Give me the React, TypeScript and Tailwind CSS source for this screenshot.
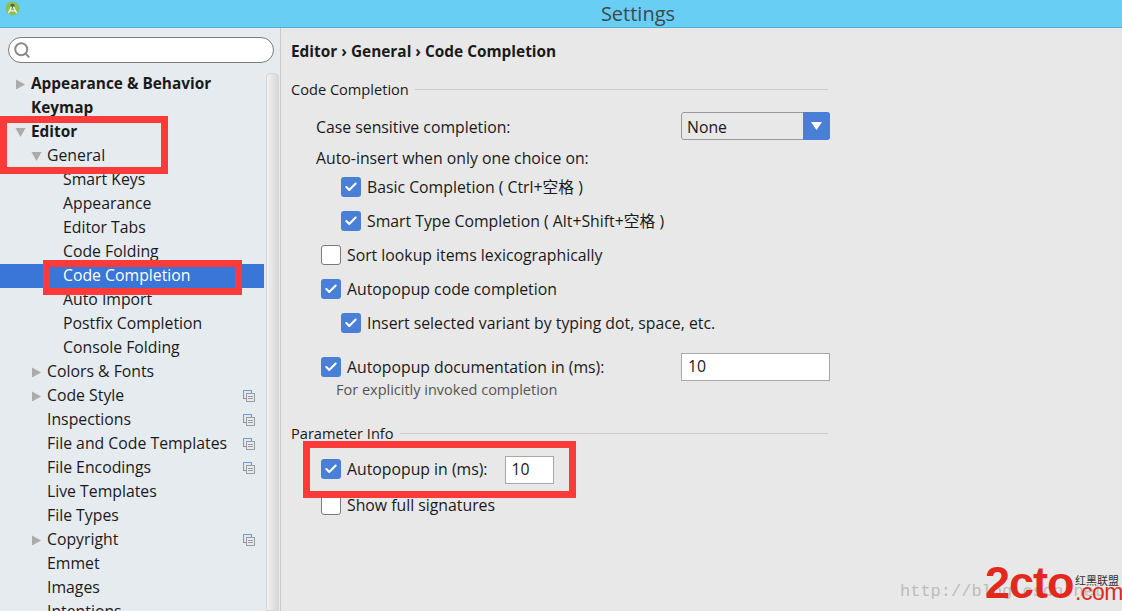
import { Check, Search } from "lucide-react";

const font = { fontFamily: '"Open Sans", "Noto Sans CJK SC", sans-serif' };

type Node = { label: string; depth: number; arrow?: "right" | "down"; bold?: boolean; copy?: boolean; selected?: boolean };

const tree: Node[] = [
  { label: "Appearance & Behavior", depth: 0, arrow: "right", bold: true },
  { label: "Keymap", depth: 0, bold: true },
  { label: "Editor", depth: 0, arrow: "down", bold: true },
  { label: "General", depth: 1, arrow: "down" },
  { label: "Smart Keys", depth: 2 },
  { label: "Appearance", depth: 2 },
  { label: "Editor Tabs", depth: 2 },
  { label: "Code Folding", depth: 2 },
  { label: "Code Completion", depth: 2, selected: true },
  { label: "Auto Import", depth: 2 },
  { label: "Postfix Completion", depth: 2 },
  { label: "Console Folding", depth: 2 },
  { label: "Colors & Fonts", depth: 1, arrow: "right" },
  { label: "Code Style", depth: 1, arrow: "right", copy: true },
  { label: "Inspections", depth: 1, copy: true },
  { label: "File and Code Templates", depth: 1, copy: true },
  { label: "File Encodings", depth: 1, copy: true },
  { label: "Live Templates", depth: 1 },
  { label: "File Types", depth: 1 },
  { label: "Copyright", depth: 1, arrow: "right", copy: true },
  { label: "Emmet", depth: 1 },
  { label: "Images", depth: 1 },
  { label: "Intentions", depth: 1 },
];

function Arrow({ dir }: { dir: "right" | "down" }) {
  return (
    <svg width="11" height="11" viewBox="0 0 11 11" className="shrink-0">
      <path d={dir === "right" ? "M1 0.5 L10 5.5 L1 10.5 Z" : "M0.5 1 L10.5 1 L5.5 10 Z"} fill="#ababab" />
    </svg>
  );
}

function CopyIcon() {
  return (
    <svg width="12" height="12" viewBox="0 0 12 12" className="absolute left-[243px] top-[6px]">
      <rect x="0.5" y="0.5" width="8" height="8" fill="#dfe8f2" stroke="#6d9ccf" />
      <rect x="3.5" y="3.5" width="8" height="8" fill="#e6ebf0" stroke="#9b9b9b" />
      <path d="M5 6.5 H10 M5 8.5 H10" stroke="#9b9b9b" />
    </svg>
  );
}

function TreeRow({ node }: { node: Node }) {
  const indent = [31, 47, 63][node.depth];
  return (
    <div
      className={`relative flex h-6 w-[264px] items-center whitespace-nowrap ${
        node.selected ? "bg-[#3a75d8] text-white" : "text-[#1a1a1a]"
      } ${node.bold ? "text-[15.4px] font-bold" : "text-[15.8px]"}`}
      style={{ paddingLeft: indent }}
    >
      {node.arrow && (
        <span className="absolute top-[7px]" style={{ left: indent - 16 }}>
          <Arrow dir={node.arrow} />
        </span>
      )}
      <span>{node.label}</span>
      {node.copy && <CopyIcon />}
    </div>
  );
}

function Box({ on = true }: { on?: boolean }) {
  return on ? (
    <span className="flex h-5 w-5 shrink-0 items-center justify-center rounded-[3px] bg-[#4a7fd8]">
      <Check size={14} strokeWidth={3.5} color="#fff" />
    </span>
  ) : (
    <span className="h-5 w-5 shrink-0 rounded-[3px] border border-[#7a7a7a] bg-white" />
  );
}

function CheckRow({ label, on, className }: { label: string; on?: boolean; className: string }) {
  return (
    <div className={`flex h-6 items-center gap-[6px] whitespace-nowrap ${className}`}>
      <Box on={on} />
      <span className="translate-y-px">{label}</span>
    </div>
  );
}

function GroupTitle({ label, className }: { label: string; className: string }) {
  return (
    <div className={`flex h-6 w-[537px] items-center gap-[6px] text-[14.6px] ${className}`}>
      <span className="translate-y-px whitespace-nowrap">{label}</span>
      <span className="h-px flex-1 bg-[#cbcbcb]" />
    </div>
  );
}

export default function App() {
  return (
    <div style={font} className="relative flex h-[611px] w-[1122px] flex-col overflow-hidden bg-[#e8e8e8] text-[15.8px] text-[#1a1a1a]">
      <header className="relative flex h-[28px] shrink-0 items-center justify-center border-b border-[#54aed0] bg-[#69cef4] pl-[154px] text-[20px] text-[#3c4a50]">
        <svg width="15" height="15" viewBox="0 0 16 16" className="absolute left-[5px] top-[1px]">
          <circle cx="8" cy="8" r="7.5" fill="#8cc152" />
          <circle cx="8" cy="5" r="2.2" fill="#4f5b4a" />
          <path d="M7 6 L3.5 13 M9 6 L12.5 13 M4.5 10.5 H11.5" stroke="#f2f2f2" strokeWidth="1.4" fill="none" />
        </svg>
        Settings
      </header>
      <div className="flex min-h-0 flex-1">
        <aside className="relative flex w-[281px] shrink-0 flex-col overflow-hidden border-r border-[#c9c9c9] bg-[#e6ebf0]">
          <div className="ml-2 mt-[9px] flex h-[26px] w-[266px] shrink-0 items-center rounded-full border border-[#7c7c7c] bg-white pl-[4px]">
            <Search size={18} strokeWidth={2.6} color="#8a8a8a" />
          </div>
          <div className="mt-[9px]">
            {tree.map((n) => (
              <TreeRow key={n.label} node={n} />
            ))}
          </div>
          <div className="absolute bottom-0 left-[266px] top-[45px] w-[13px] rounded-t-sm border border-[#d5d5d5] bg-gradient-to-r from-[#f1f1f1] to-[#d8d8d8]" />
        </aside>
        <main className="min-w-0 flex-1 pl-[10px]">
          <div className="mt-[11px] flex h-6 translate-y-px items-center text-[15.4px] font-bold">Editor › General › Code Completion</div>
          <GroupTitle label="Code Completion" className="mt-[14px]" />
          <div className="mt-[13px] flex h-6 w-[539px] items-center justify-between pl-[25px]">
            <span className="translate-y-[2px]">Case sensitive completion:</span>
            <div className="flex h-7 w-[149px] items-stretch rounded-[3px] border border-[#9a9a9a]">
              <span className="flex-1 translate-y-px pl-[5px] leading-[26px]">None</span>
              <span className="-my-px -mr-px flex w-[27px] items-center justify-center rounded-r-[3px] bg-[#4a7fd8]">
                <svg width="11" height="8" viewBox="0 0 11 8"><path d="M0 0 H11 L5.5 8 Z" fill="#fff" /></svg>
              </span>
            </div>
          </div>
          <div className="mt-[7px] flex h-6 items-center pl-[25px]">
            <span className="translate-y-[2px]">Auto-insert when only one choice on:</span>
          </div>
          <CheckRow label="Basic Completion ( Ctrl+空格 )" className="mt-[6px] pl-[50px]" />
          <CheckRow label="Smart Type Completion ( Alt+Shift+空格 )" className="mt-[10px] pl-[50px]" />
          <CheckRow label="Sort lookup items lexicographically" on={false} className="mt-[10px] pl-[30px]" />
          <CheckRow label="Autopopup code completion" className="mt-[10px] pl-[30px]" />
          <CheckRow label="Insert selected variant by typing dot, space, etc." className="mt-[10px] pl-[50px]" />
          <div className="mt-[20px] flex h-6 w-[539px] items-center justify-between pl-[30px]">
            <div className="flex items-center gap-[6px]">
              <Box />
              <span className="translate-y-px">Autopopup documentation in (ms):</span>
            </div>
            <div className="flex h-7 w-[149px] items-center border border-[#a8a8a8] bg-white pl-[6px]">10</div>
          </div>
          <div className="mt-[3px] flex h-4 items-center pl-[45px] text-[14.5px] text-[#555]">For explicitly invoked completion</div>
          <GroupTitle label="Parameter Info" className="mt-[23px]" />
          <div className="mt-[12px] flex h-6 items-center pl-[30px]">
            <Box />
            <span className="ml-[6px] translate-y-px whitespace-nowrap">Autopopup in (ms):</span>
            <div className="ml-[17px] flex h-7 w-[49px] translate-y-px items-center border border-[#a8a8a8] bg-white pl-[6px]">10</div>
          </div>
          <CheckRow label="Show full signatures" on={false} className="mt-[12px] pl-[30px]" />
        </main>
      </div>

      <div className="absolute left-0 top-[116px] h-[58px] w-[168px] border-[7px] border-[#fb3a3a]" />
      <div className="absolute left-[43px] top-[260px] h-[35px] w-[199px] border-[7px] border-[#fb3a3a]" />
      <div className="absolute left-[303px] top-[441px] h-[57px] w-[273px] border-[7px] border-[#fb3a3a]" />

      <div className="absolute left-[900px] top-[582px] whitespace-nowrap font-['Liberation_Mono',monospace] text-[17px] leading-5 text-[#bdbdb8]">http://blog.csdn.net</div>
      <div className="absolute left-[985px] top-[560px] whitespace-nowrap font-['Liberation_Sans',sans-serif] text-[45px] font-bold leading-[46px] tracking-[-1px] text-[#e1291f]">2cto</div>
      <div className="absolute left-[1075px] top-[572px] whitespace-nowrap font-['Noto_Sans_CJK_SC',sans-serif] text-[11px] leading-4 text-[#333]">红黑联盟</div>
      <div className="absolute left-[1075px] top-[580px] whitespace-nowrap font-['Liberation_Sans',sans-serif] text-[23px] leading-6 tracking-[-0.5px] text-[#e1291f]">.com</div>
    </div>
  );
}
